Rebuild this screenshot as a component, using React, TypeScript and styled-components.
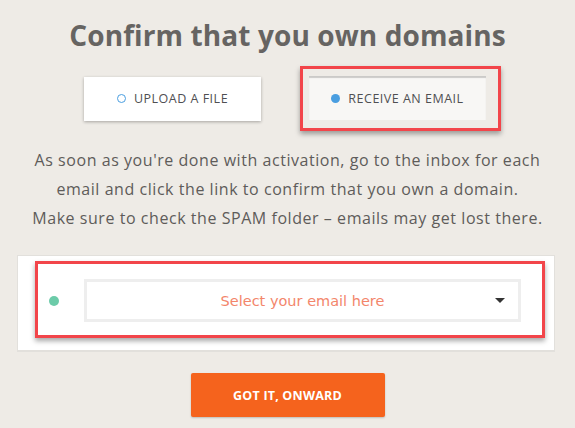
import React, { useState } from 'react';
import styled, { createGlobalStyle } from 'styled-components';

const GlobalStyle = createGlobalStyle`
  html, body {
    margin: 0;
    padding: 0;
    background: #eeebe6;
  }
  body {
    font-family: "Open Sans", "Liberation Sans", sans-serif;
  }
`;

const Page = styled.div`
  width: 575px;
  height: 428px;
  display: flex;
  flex-direction: column;
  align-items: center;
  background: #eeebe6;
  overflow: hidden;
`;

const Title = styled.h1`
  margin: 16px 0 0;
  font-size: 28px;
  line-height: 38px;
  font-weight: 700;
  color: #666462;
  letter-spacing: 0.1px;
`;

const Tabs = styled.div`
  display: flex;
  align-items: center;
  gap: 39px;
  margin-top: 12px;
  margin-left: 10px;
`;

const Highlight = styled.div<{ $pad: string }>`
  border: 3px solid #f2454a;
  padding: ${(p) => p.$pad};
  box-shadow: 0 3px 5px rgba(0, 0, 0, 0.35);
`;

const Tab = styled.button<{ $active?: boolean }>`
  width: 177px;
  height: 44px;
  display: flex;
  align-items: center;
  justify-content: center;
  gap: 8px;
  border: none;
  cursor: pointer;
  font-family: "Open Sans", sans-serif;
  font-size: 12.5px;
  font-weight: 400;
  letter-spacing: 0.5px;
  color: #4f4f52;
  background: ${(p) => (p.$active ? '#f8f7f5' : '#fff')};
  box-shadow: ${(p) =>
    p.$active
      ? 'inset 0 2px 1px rgba(0,0,0,0.18)'
      : '0 1px 3px rgba(0,0,0,0.3)'};
`;

const Radio = styled.span<{ $on?: boolean }>`
  width: 9px;
  height: 9px;
  border-radius: 50%;
  box-sizing: border-box;
  border: ${(p) => (p.$on ? 'none' : '1.5px solid #4a9ee0')};
  background: ${(p) => (p.$on ? '#4a9ee0' : 'transparent')};
`;

const Text = styled.p`
  margin: 15px 0 0;
  text-align: center;
  font-size: 16px;
  line-height: 29px;
  letter-spacing: 0.55px;
  color: #5e5c5a;
`;

const Panel = styled.div`
  width: 538px;
  box-sizing: border-box;
  margin-top: 22px;
  margin-left: -3px;
  background: #fff;
  border: 1px solid #e2e0dc;
  border-bottom-width: 2px;
  padding: 5px 9px 12px 17px;
`;

const Row = styled.div`
  display: flex;
  align-items: center;
  padding: 15px 21px 13px 0;
`;

const Dot = styled.span`
  width: 10px;
  height: 10px;
  margin-left: 11px;
  border-radius: 50%;
  background: #6ccba9;
`;

const Select = styled.div`
  position: relative;
  margin-left: 25px;
  flex: 1;
  height: 43px;
  box-sizing: border-box;
  border: 3px solid #eeeeee;
  display: flex;
  align-items: center;
  justify-content: center;
  font-family: "DejaVu Sans", sans-serif;
  font-size: 14.5px;
  color: #f3866b;
  cursor: pointer;
`;

const Caret = styled.span`
  position: absolute;
  right: 13px;
  top: 16px;
  width: 0;
  height: 0;
  border-left: 5px solid transparent;
  border-right: 5px solid transparent;
  border-top: 5px solid #333;
`;

const Onward = styled.button`
  margin-top: 21px;
  width: 194px;
  height: 44px;
  border: none;
  border-radius: 2px;
  background: #f5631d;
  color: #fff;
  font-family: "Open Sans", sans-serif;
  font-weight: 700;
  font-size: 12.5px;
  letter-spacing: 0.2px;
  box-shadow: 0 1px 2px rgba(0, 0, 0, 0.2);
  cursor: pointer;
`;

const App: React.FC = () => {
  const [method, setMethod] = useState<'file' | 'email'>('email');

  return (
    <>
      <GlobalStyle />
      <Page>
        <Title>Confirm that you own domains</Title>
        <Tabs>
          <Tab $active={method === 'file'} onClick={() => setMethod('file')}>
            <Radio $on={method === 'file'} />
            UPLOAD A FILE
          </Tab>
          <Highlight $pad="7px 12px 8px 6px">
            <Tab $active={method === 'email'} onClick={() => setMethod('email')}>
              <Radio $on={method === 'email'} />
              RECEIVE AN EMAIL
            </Tab>
          </Highlight>
        </Tabs>
        <Text>
          As soon as you're done with activation, go to the inbox for each
          <br />
          email and click the link to confirm that you own a domain.
          <br />
          Make sure to check the SPAM folder – emails may get lost there.
        </Text>
        <Panel>
          <Highlight $pad="0">
            <Row>
              <Dot />
              <Select>
                Select your email here
                <Caret />
              </Select>
            </Row>
          </Highlight>
        </Panel>
        <Onward>GOT IT, ONWARD</Onward>
      </Page>
    </>
  );
};

export default App;
